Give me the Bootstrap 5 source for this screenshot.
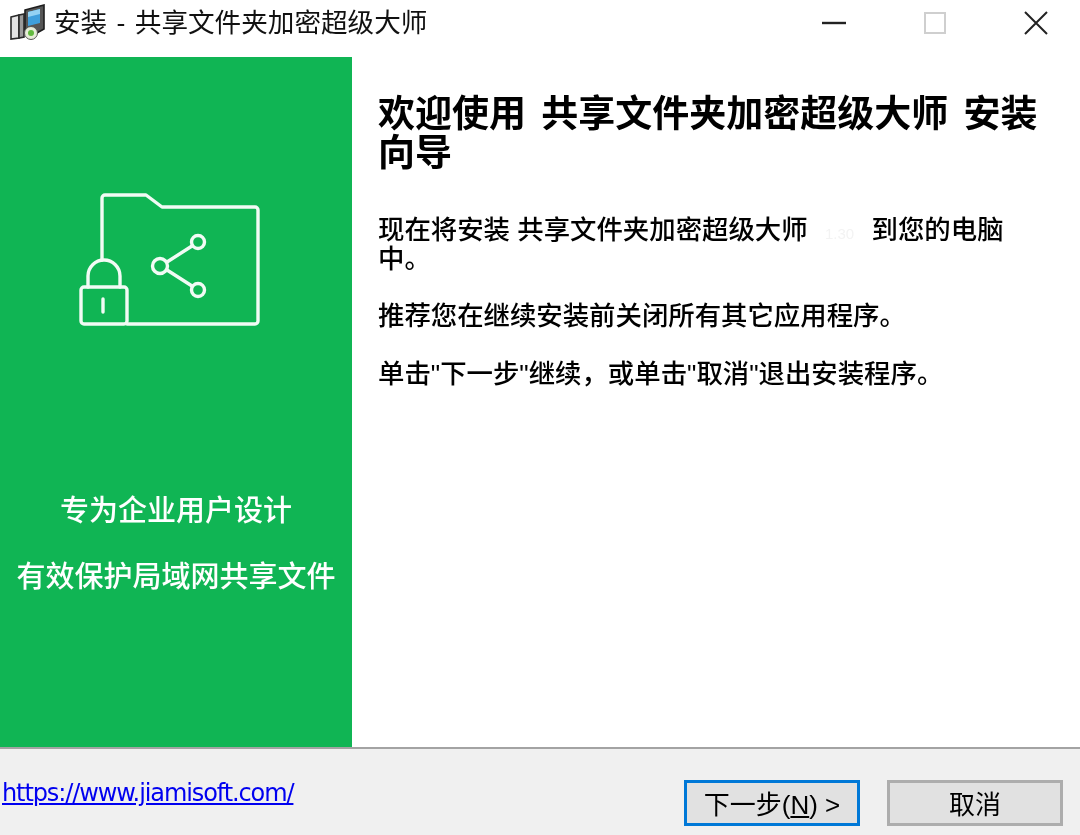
<!DOCTYPE html>
<html lang="zh-CN">
  <head>
    <title>安装 - 共享文件夹加密超级大师</title>
    <meta charset="utf-8" />
    <meta name="viewport" content="width=device-width, initial-scale=1" />
    <link href="https://cdn.jsdelivr.net/npm/bootstrap@5.3.2/dist/css/bootstrap.min.css" rel="stylesheet" />
    <style>
      html, body { height: 100%; }
      body {
        width: 1080px; height: 835px; overflow: hidden; background: #fff; color: #000;
        font-family: "Liberation Sans", "Noto Sans CJK SC", sans-serif;
      }
      .app-window { height: 835px; filter: blur(0.45px); }
      .title-bar { height: 57px; padding-left: 10px; }
      .title-text { font-size: 26.6px; line-height: 46px; margin-left: 8px; color: #111; word-spacing: 2px; }
      .win-controls { margin-right: -6px; }
      .win-btn { width: 101px; height: 46px; display: flex; align-items: center; justify-content: center; }
      .wizard-body { height: 690px; }
      .side-panel { width: 352px; background: #10b554; color: #fff; }
      .side-icon { margin-top: 135px; margin-left: 78px; display: block; }
      .side-line { font-size: 29px; line-height: 38px; font-weight: 500; text-align: center; }
      .side-line-first { margin-top: 164px; }
      .side-line-second { margin-top: 28px; }
      .main-panel { padding: 38px 30px 0 26px; }
      .wizard-heading { font-size: 37px; line-height: 39px; font-weight: 700; margin: 0 0 43px; word-spacing: 5px; }
      .wizard-text { font-size: 26.4px; line-height: 28.6px; margin: 0 0 29px; font-weight: 500; }
      .ghost-text { display: inline-block; width: 64px; color: #f3f3f3; font-size: 15px; line-height: 0; text-align: center; }
      .wizard-footer { height: 88px; background: #f0f0f0; border-top: 2px solid #a3a3a3; }
      .site-link { color: #0000f0; font-size: 24px; margin-left: 2px; margin-top: 26px; line-height: 36px; font-family: "DejaVu Sans", sans-serif; letter-spacing: -1.1px; }
      .wizard-btn {
        width: 176px; height: 46px; padding: 3px 0 0; border-radius: 0; font-size: 26px; line-height: 36px;
        background: #e1e1e1; border: 3px solid #adadad; color: #000;
      }
      .wizard-btn-default { border-color: #0078d7; }
      .footer-btns { gap: 27px; margin: 31px 17px 0 0; }
    </style>
    <script src="https://cdn.jsdelivr.net/npm/bootstrap@5.3.2/dist/js/bootstrap.bundle.min.js"></script>
  </head>
  <body>
    <div class="app-window d-flex flex-column">
      <div class="title-bar d-flex align-items-start">
        <svg class="mt-1" width="36" height="36" viewBox="0 0 36 36">
          <path d="M1 13l8-2v23l-8 1z" fill="#e4e4e4" stroke="#2a2a2a" stroke-width="1.6" />
          <path d="M9 11l5-1v23l-5 1z" fill="#9a9a9a" stroke="#2a2a2a" stroke-width="1.6" />
          <path d="M15 6l19-5v24l-7 4H15z" fill="#565656" stroke="#1e1e1e" stroke-width="1.6" />
          <path d="M18 8l12-3v14l-12 3z" fill="#3f9fdc" />
          <path d="M18 8l12-3v5l-12 3z" fill="#93d2f3" />
          <circle cx="21" cy="29" r="6.5" fill="#e6ecd8" stroke="#555" />
          <circle cx="21" cy="29" r="3" fill="#62b93e" />
        </svg>
        <div class="title-text">安装 - 共享文件夹加密超级大师</div>
        <div class="win-controls d-flex ms-auto">
          <div class="win-btn">
            <svg width="24" height="4" viewBox="0 0 24 4"><path d="M0 2h24" stroke="#222" stroke-width="2.4" /></svg>
          </div>
          <div class="win-btn">
            <svg width="22" height="22" viewBox="0 0 22 22"><rect x="1" y="1" width="20" height="20" fill="none" stroke="#cfcfcf" stroke-width="2" /></svg>
          </div>
          <div class="win-btn">
            <svg width="24" height="24" viewBox="0 0 24 24"><path d="M1 1l22 22M23 1L1 23" stroke="#222" stroke-width="2" /></svg>
          </div>
        </div>
      </div>

      <div class="wizard-body d-flex">
        <div class="side-panel flex-shrink-0">
          <svg class="side-icon" width="184" height="136" viewBox="78 192 184 136" fill="none" stroke="#f2fbf5" stroke-width="3.4" stroke-linejoin="round" stroke-linecap="round">
            <path d="M102 260V198a3 3 0 0 1 3-3h41l16 12h93a3 3 0 0 1 3 3v111a3 3 0 0 1-3 3H127" />
            <rect x="81" y="287" width="46" height="37" rx="3" />
            <path d="M88 287v-11a16 16 0 0 1 32 0v11" />
            <path d="M103 299v13" />
            <circle cx="160" cy="266" r="7.5" />
            <circle cx="198" cy="242" r="6.5" />
            <circle cx="198" cy="290" r="6.5" />
            <path d="M167 262l25-16M167 270l25 16" />
          </svg>
          <div class="side-line side-line-first">专为企业用户设计</div>
          <div class="side-line side-line-second">有效保护局域网共享文件</div>
        </div>
        <div class="main-panel flex-grow-1">
          <h1 class="wizard-heading">欢迎使用 共享文件夹加密超级大师 安装向导</h1>
          <p class="wizard-text">现在将安装 共享文件夹加密超级大师<span class="ghost-text">1.30</span>到您的电脑中。</p>
          <p class="wizard-text">推荐您在继续安装前关闭所有其它应用程序。</p>
          <p class="wizard-text">单击"下一步"继续，或单击"取消"退出安装程序。</p>
        </div>
      </div>

      <div class="wizard-footer d-flex justify-content-between align-items-start">
        <a class="site-link" href="#">https://www.jiamisoft.com/</a>
        <div class="footer-btns d-flex">
          <button type="button" class="btn wizard-btn wizard-btn-default">下一步(<u>N</u>) &gt;</button>
          <button type="button" class="btn wizard-btn">取消</button>
        </div>
      </div>
    </div>
  </body>
</html>
